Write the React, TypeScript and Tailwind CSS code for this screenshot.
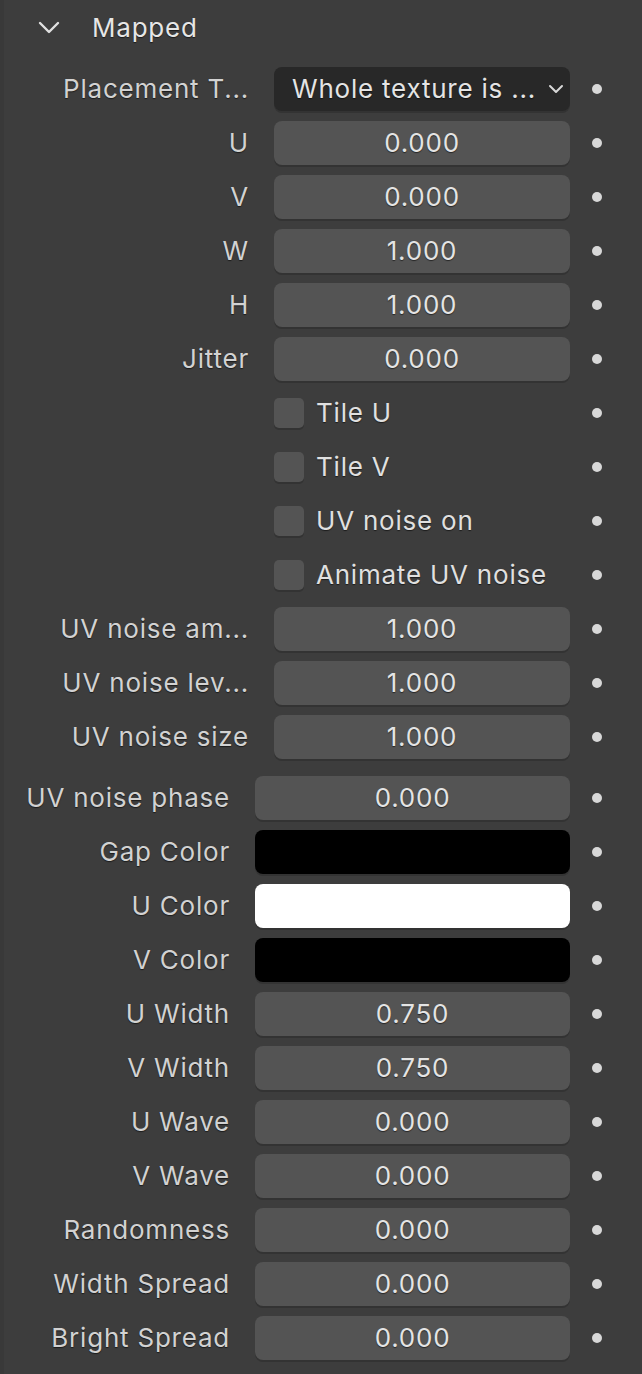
import React from "react";

type Row =
  | { kind: "number"; label: string; value: string }
  | { kind: "check"; label: string }
  | { kind: "color"; label: string; color: string };

const topRows: Row[] = [
  { kind: "number", label: "U", value: "0.000" },
  { kind: "number", label: "V", value: "0.000" },
  { kind: "number", label: "W", value: "1.000" },
  { kind: "number", label: "H", value: "1.000" },
  { kind: "number", label: "Jitter", value: "0.000" },
  { kind: "check", label: "Tile U" },
  { kind: "check", label: "Tile V" },
  { kind: "check", label: "UV noise on" },
  { kind: "check", label: "Animate UV noise" },
  { kind: "number", label: "UV noise am...", value: "1.000" },
  { kind: "number", label: "UV noise lev...", value: "1.000" },
  { kind: "number", label: "UV noise size", value: "1.000" },
];

const bottomRows: Row[] = [
  { kind: "number", label: "UV noise phase", value: "0.000" },
  { kind: "color", label: "Gap Color", color: "bg-black" },
  { kind: "color", label: "U Color", color: "bg-white" },
  { kind: "color", label: "V Color", color: "bg-black" },
  { kind: "number", label: "U Width", value: "0.750" },
  { kind: "number", label: "V Width", value: "0.750" },
  { kind: "number", label: "U Wave", value: "0.000" },
  { kind: "number", label: "V Wave", value: "0.000" },
  { kind: "number", label: "Randomness", value: "0.000" },
  { kind: "number", label: "Width Spread", value: "0.000" },
  { kind: "number", label: "Bright Spread", value: "0.000" },
];

const shadowText = "[text-shadow:0_1px_1px_rgba(0,0,0,0.55)]";

function Dot() {
  return (
    <div className="ml-[22px] flex w-[10px] justify-center">
      <span className="block size-[10px] rounded-full bg-[#d8d8d8]" />
    </div>
  );
}

function PropRow({ row, wide }: { row: Row; wide: boolean }) {
  const labelW = wide ? "w-[230px]" : "w-[249px]";
  const fieldW = wide ? "w-[315px]" : "w-[296px]";

  return (
    <div className="flex h-[44px] items-center">
      <div
        className={`${labelW} shrink-0 whitespace-nowrap text-right text-[#d2d2d2] ${shadowText}`}
      >
        {row.kind !== "check" && row.label}
      </div>
      <div className={`ml-[25px] ${fieldW} shrink-0`}>
        {row.kind === "number" && (
          <div
            className={`flex h-[44px] items-center justify-center rounded-[8px] bg-[#545454] text-[#e4e4e4] shadow-[0_2px_0_#333333] ${shadowText}`}
          >
            {row.value}
          </div>
        )}
        {row.kind === "color" && (
          <div
            className={`h-[44px] rounded-[8px] ${row.color} shadow-[0_2px_0_#333333]`}
          />
        )}
        {row.kind === "check" && (
          <div className="flex items-center gap-[12px]">
            <span className="block size-[30px] rounded-[5px] bg-[#545454] shadow-[0_2px_0_#333333]" />
            <span className={`text-[#e0e0e0] ${shadowText}`}>{row.label}</span>
          </div>
        )}
      </div>
      <Dot />
    </div>
  );
}

export default function App() {
  return (
    <div
      className="relative h-[1374px] w-[642px] overflow-hidden bg-[#3d3d3d] text-[26px] leading-none tracking-[0.03em]"
      style={{ fontFamily: "Inter, 'Noto Sans', sans-serif" }}
    >
      <div className="absolute inset-y-0 left-0 w-[4px] bg-[#393939]" />

      <div className="flex h-[56px] items-center pl-[38px]">
        <svg width="22" height="14" viewBox="0 0 22 14" fill="none">
          <polyline
            points="2,2 11,11 20,2"
            stroke="#e0e0e0"
            strokeWidth="2.4"
            strokeLinecap="round"
            strokeLinejoin="round"
          />
        </svg>
        <span className={`ml-[32px] text-[#e6e6e6] ${shadowText}`}>Mapped</span>
      </div>

      <div className="flex flex-col gap-[10px] pt-[11px]">
        <div className="flex h-[44px] items-center">
          <div
            className={`w-[249px] shrink-0 whitespace-nowrap text-right text-[#d2d2d2] ${shadowText}`}
          >
            Placement T...
          </div>
          <div
            className={`ml-[25px] flex h-[44px] w-[296px] shrink-0 items-center rounded-[8px] bg-[#282828] pl-[18px] pr-[6px] text-[#e4e4e4] shadow-[0_2px_0_#333333] ${shadowText}`}
          >
            <span className="whitespace-nowrap">Whole texture is ...</span>
            <svg
              className="ml-auto shrink-0"
              width="16"
              height="10"
              viewBox="0 0 16 10"
              fill="none"
            >
              <polyline
                points="2,2 8,8 14,2"
                stroke="#d8d8d8"
                strokeWidth="2"
                strokeLinecap="round"
                strokeLinejoin="round"
              />
            </svg>
          </div>
          <Dot />
        </div>

        {topRows.map((row) => (
          <PropRow key={row.label} row={row} wide={false} />
        ))}

        <div className="mt-[7px] flex flex-col gap-[10px]">
          {bottomRows.map((row) => (
            <PropRow key={row.label} row={row} wide />
          ))}
        </div>
      </div>
    </div>
  );
}
